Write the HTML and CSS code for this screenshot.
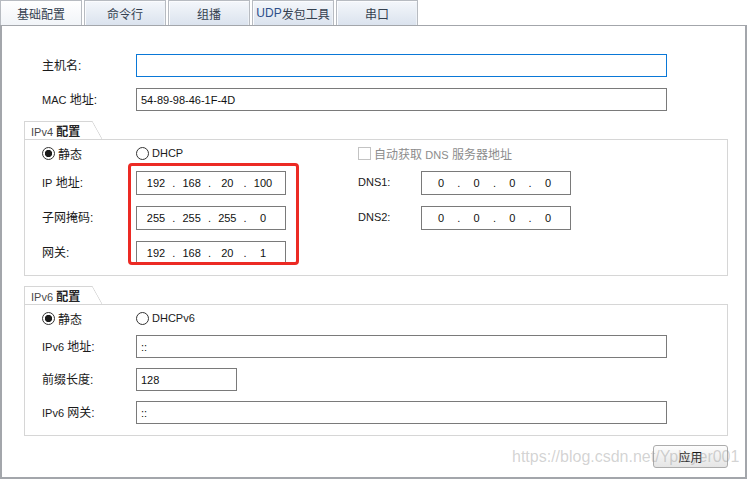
FILE: index.html
```html
<!DOCTYPE html>
<html lang="zh-CN">
<head>
<meta charset="utf-8">
<title>基础配置</title>
<link rel="stylesheet" href="styles.css">
</head>
<body>
<div class="app">
  <div class="tabs">
    <div class="tab active">基础配置</div>
    <div class="tab">命令行</div>
    <div class="tab">组播</div>
    <div class="tab"><span class="en">UDP</span>发包工具</div>
    <div class="tab">串口</div>
  </div>
  <div class="panel">
    <div class="basic">
      <span class="lbl">主机名:</span>
      <div class="field focus"></div>
      <span class="lbl"><span class="en">MAC</span> 地址:</span>
      <div class="field">54-89-98-46-1F-4D</div>
    </div>

    <div class="group">
      <div class="legend"><span class="lat">IPv4</span> <b>配置</b></div>
      <div class="gbox v4">
        <label class="radio checked"><i></i>静态</label>
        <label class="radio"><i></i><span class="en">DHCP</span></label>
        <span></span>
        <label class="check"><i></i><span>自动获取 <span class="en">DNS</span> 服务器地址</span></label>

        <span class="lbl"><span class="en">IP</span> 地址:</span>
        <div class="field ip"><span class="seg">192</span><span class="dot">.</span><span class="seg">168</span><span class="dot">.</span><span class="seg">20</span><span class="dot">.</span><span class="seg">100</span></div>
        <span></span>
        <span class="lbl"><span class="en">DNS1:</span></span>
        <div class="field ip"><span class="seg">0</span><span class="dot">.</span><span class="seg">0</span><span class="dot">.</span><span class="seg">0</span><span class="dot">.</span><span class="seg">0</span></div>

        <span class="lbl">子网掩码:</span>
        <div class="field ip"><span class="seg">255</span><span class="dot">.</span><span class="seg">255</span><span class="dot">.</span><span class="seg">255</span><span class="dot">.</span><span class="seg">0</span></div>
        <span></span>
        <span class="lbl"><span class="en">DNS2:</span></span>
        <div class="field ip"><span class="seg">0</span><span class="dot">.</span><span class="seg">0</span><span class="dot">.</span><span class="seg">0</span><span class="dot">.</span><span class="seg">0</span></div>

        <span class="lbl">网关:</span>
        <div class="field ip"><span class="seg">192</span><span class="dot">.</span><span class="seg">168</span><span class="dot">.</span><span class="seg">20</span><span class="dot">.</span><span class="seg">1</span></div>

        <div class="mark"></div>
      </div>
    </div>

    <div class="group">
      <div class="legend"><span class="lat">IPv6</span> <b>配置</b></div>
      <div class="gbox v6">
        <label class="radio checked"><i></i>静态</label>
        <label class="radio"><i></i><span class="en">DHCPv6</span></label>

        <span class="lbl"><span class="en">IPv6</span> 地址:</span>
        <div class="field">::</div>

        <span class="lbl">前缀长度:</span>
        <div class="field short">128</div>

        <span class="lbl"><span class="en">IPv6</span> 网关:</span>
        <div class="field">::</div>
      </div>
    </div>

    <div class="actions">
      <button class="btn" type="button">应用</button>
    </div>
  </div>
  <div class="watermark">https://blog.csdn.net/Yplayer001</div>
</div>
</body>
</html>
```

FILE: styles.css
```css
* { box-sizing: border-box; }

body {
  margin: 0;
  width: 747px;
  height: 479px;
  overflow: hidden;
  background: #fff;
  font-family: "Liberation Sans", "Noto Sans CJK SC", sans-serif;
  font-size: 12px;
  color: #1a1a1a;
}

.app {
  position: relative;
  width: 747px;
  height: 479px;
}

.en { font-size: 11px; }

/* tabs */
.tabs {
  display: flex;
  gap: 2px;
  height: 25px;
}

.tab {
  width: 82px;
  height: 25px;
  border: 1px solid #b7bbc1;
  border-bottom: none;
  background: linear-gradient(#f4f7fb, #dbe3ee);
  box-shadow: inset 1px 1px 0 #fbfcfe, inset -1px 0 0 #eef2f7;
  display: flex;
  align-items: center;
  justify-content: center;
  font-size: 12px;
  color: #34404f;
}

.tab .en { font-size: 12px; color: #2d4f8a; }

.tab.active {
  background: linear-gradient(#ffffff, #f1f4f8);
  box-shadow: none;
}

/* main panel */
.panel {
  height: 454px;
  border: 2px solid #a3a6ab;
  border-top: 1px solid #a3a6ab;
}

.lbl {
  white-space: nowrap;
  color: #1a1a1a;
  margin-bottom: 3px;
}

.field {
  height: 23px;
  border: 1px solid #7a7a7a;
  padding: 0 4px;
  display: flex;
  align-items: center;
  font-size: 11px;
  color: #111;
  background: #fff;
}

.field.focus { border-color: #0a78d7; }
.field.short { width: 101px; }

.basic {
  display: grid;
  grid-template-columns: 94px 531px;
  row-gap: 11px;
  align-items: center;
  padding: 28px 0 0 40px;
}

/* group boxes */
.group {
  margin: 10px 0 0 22px;
  width: 704px;
}

.legend {
  position: relative;
  width: 68px;
  height: 18px;
  border-top: 1px solid #d6d6d6;
  border-left: 1px solid #d6d6d6;
  padding: 4px 0 0 6px;
  line-height: 12px;
  font-size: 12px;
  white-space: nowrap;
  color: #333;
}

.legend .lat { color: #4a4a4a; font-size: 11px; }
.legend b { font-weight: 700; color: #262626; }

.legend::after {
  content: "";
  position: absolute;
  top: -1px;
  right: -10px;
  width: 10px;
  height: 18px;
  background: linear-gradient(to top right, transparent calc(50% - 0.7px), #d6d6d6 50%, transparent calc(50% + 0.7px));
}

.gbox {
  position: relative;
  border: 1px solid #d6d6d6;
  display: grid;
  align-items: center;
  padding-left: 17px;
}

.v4 {
  grid-template-columns: 94px 150px 72px 63px 150px;
  grid-template-rows: 14px 24px 24px 24px;
  row-gap: 11px;
  padding-top: 6px;
  padding-bottom: 10px;
}

.v4 .field { height: 24px; }

.v4 .check { grid-column: 4 / span 2; }

.v6 {
  grid-template-columns: 94px 531px;
  grid-template-rows: 14px 23px 23px 23px;
  row-gap: 10px;
  padding-top: 6px;
  padding-bottom: 11px;
}

/* ip fields */
.field.ip {
  padding: 0 0 0 6px;
}

.seg {
  width: 26px;
  text-align: center;
}

.dot {
  width: 9.67px;
  text-align: center;
}

/* radio / checkbox */
.radio, .check {
  display: inline-flex;
  align-items: center;
  gap: 3px;
  white-space: nowrap;
}

.radio i {
  flex: none;
  width: 13px;
  height: 13px;
  border: 1px solid #333;
  border-radius: 50%;
  background: #fff;
}

.radio.checked i {
  background: radial-gradient(circle, #1c1c1c 3.3px, #fff 4px);
}

.check { color: #8c8c8c; }

.check i {
  flex: none;
  width: 13px;
  height: 13px;
  border: 1px solid #c3c3c3;
  background: #fff;
}

/* red annotation rectangle */
.mark {
  position: absolute;
  left: 103px;
  top: 23px;
  width: 171px;
  height: 102px;
  border: 3px solid #ec2a24;
  border-radius: 4px;
  pointer-events: none;
}

/* actions */
.actions {
  display: flex;
  justify-content: flex-end;
  margin: 9px 0 0 22px;
  width: 704px;
}

.btn {
  width: 75px;
  height: 23px;
  border: 1px solid #acacac;
  border-radius: 3px;
  background: linear-gradient(#fdfdfd, #e5e5e5);
  font-family: "Liberation Sans", "Noto Sans CJK SC", sans-serif;
  font-size: 12px;
  color: #1a1a1a;
  padding: 0;
}

.watermark {
  position: absolute;
  left: 512px;
  top: 448px;
  font-family: "Liberation Sans", sans-serif;
  font-size: 16px;
  line-height: 18px;
  color: rgba(150, 150, 150, 0.42);
  white-space: nowrap;
  pointer-events: none;
}
```
